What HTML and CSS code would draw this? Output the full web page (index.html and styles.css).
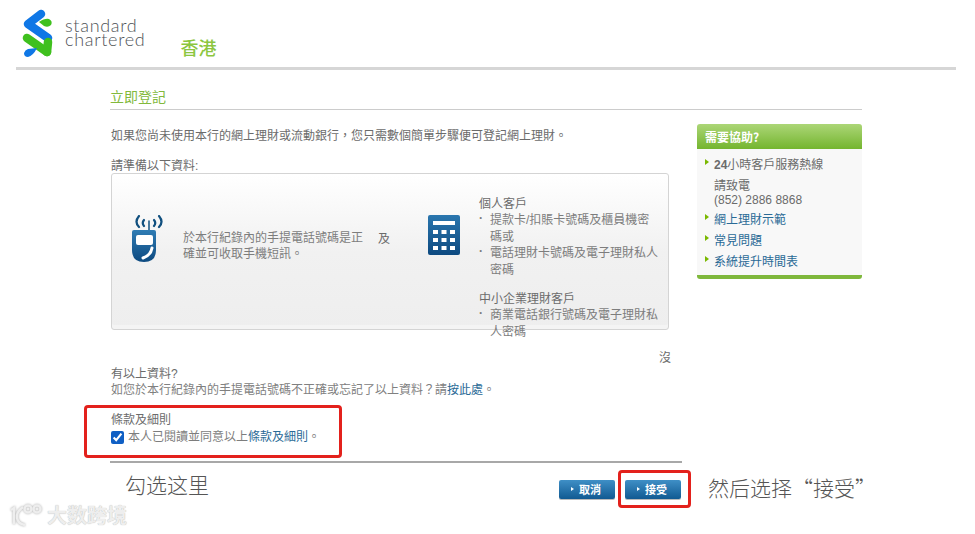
FILE: index.html
```html
<!DOCTYPE html>
<html lang="zh-Hant">
<head>
<meta charset="utf-8">
<title>立即登記</title>
<link rel="stylesheet" href="styles.css">
</head>
<body>
<header class="site-header">
  <svg class="logo" width="32" height="50" viewBox="0 0 32 50">
    <path class="logo-blue" d="M19 5 L6 15 L26 29" />
    <path class="logo-green-dot" d="M17 13 Q23 9 27 10 Q31 12 29 16 Q26 19 22 17 Z"/>
    <path class="logo-green" d="M5 29 L25 43" />
    <path class="logo-green" d="M25 43 L26 33" />
    <path class="logo-blue-dot" d="M15 39 Q11 47 6 48 Q2 48 2 44 Q3 41 6 40 Z"/>
  </svg>
  <div class="wordmark">standard<br>chartered</div>
  <div class="region">香港</div>
</header>
<div class="layout">
  <main class="content">
    <h1 class="title">立即登記</h1>
    <p class="intro">如果您尚未使用本行的網上理財或流動銀行，您只需數個簡單步驟便可登記網上理財。</p>
    <p class="prepare">請準備以下資料:</p>
    <section class="panel">
      <svg class="phone-icon" width="32" height="48" viewBox="0 0 32 48">
        <defs><linearGradient id="bl" x1="0" y1="0" x2="0" y2="1"><stop offset="0" stop-color="#2f7cb4"/><stop offset="1" stop-color="#0d4a80"/></linearGradient></defs>
        <path d="M7 1 Q2 7 7 12 M12 5 Q9.500 8 12 11 M22 5 Q24.500 8 22 11 M27 1 Q32 7 27 12" class="waves"/>
        <path d="M17 6 V16" class="antenna"/>
        <path d="M0 17 Q0 15 2 15 H22 Q24 15 24 17 V35 Q24 47 12 47 Q0 47 0 35Z" fill="url(#bl)"/>
        <rect x="4" y="20" width="17" height="10" rx="2" fill="#fff"/>
        <path d="M20 33 Q19 40 11 43" class="phone-curve"/>
      </svg>
      <p class="phone-text">於本行紀錄內的手提電話號碼是正確並可收取手機短訊。</p>
      <span class="and">及</span>
      <svg class="calc-icon" width="32" height="40" viewBox="0 0 32 40">
        <defs><linearGradient id="bc" x1="0" y1="0" x2="0" y2="1"><stop offset="0" stop-color="#2a76ae"/><stop offset="1" stop-color="#0d4a80"/></linearGradient></defs>
        <rect width="32" height="40" rx="2" fill="url(#bc)"/>
        <rect x="5" y="6" width="22" height="4" fill="#fff"/>
        <g fill="#fff">
          <rect x="5" y="15" width="5" height="4"/><rect x="13.500" y="15" width="5" height="4"/><rect x="22" y="15" width="5" height="4"/>
          <rect x="5" y="23" width="5" height="4"/><rect x="13.500" y="23" width="5" height="4"/><rect x="22" y="23" width="5" height="4"/>
          <rect x="5" y="31" width="5" height="4"/><rect x="13.500" y="31" width="5" height="4"/><rect x="22" y="31" width="5" height="4"/>
        </g>
      </svg>
      <div class="req">
        <h2 class="req-title">個人客戶</h2>
        <ul class="req-list">
          <li>提款卡/扣賬卡號碼及櫃員機密碼或</li>
          <li>電話理財卡號碼及電子理財私人密碼</li>
        </ul>
        <h2 class="req-title req-gap">中小企業理財客戶</h2>
        <ul class="req-list">
          <li>商業電話銀行號碼及電子理財私人密碼</li>
        </ul>
      </div>
    </section>
    <div class="missing">
      <h3 class="missing-title"><span class="wrap-char">沒</span>有以上資料?</h3>
      <p class="missing-text">如您於本行紀錄內的手提電話號碼不正確或忘記了以上資料？請<a href="#">按此處</a>。</p>
    </div>
    <div class="terms">
      <div class="terms-title">條款及細則</div>
      <label class="terms-check"><input type="checkbox" checked>本人已閱讀並同意以上<a href="#">條款及細則</a>。</label>
    </div>
    <div class="actions">
      <button class="btn btn-cancel" type="button">取消</button>
      <button class="btn" type="button">接受</button>
    </div>
  </main>
  <aside class="help">
    <div class="help-head">需要協助?</div>
    <ul class="help-list">
      <li class="hotline"><b>24</b>小時客戶服務熱線
        <div class="hotline-sub">請致電<br>(852) 2886 8868</div></li>
      <li><a href="#">網上理財示範</a></li>
      <li><a href="#">常見問題</a></li>
      <li><a href="#">系統提升時間表</a></li>
    </ul>
  </aside>
</div>
<div class="mark mark-terms"></div>
<div class="mark mark-accept"></div>
<div class="note note-left">勾选这里</div>
<div class="note note-right">然后选择“接受”</div>
<div class="watermark">
  <svg width="36" height="24" viewBox="0 0 36 24"><path d="M2 7 L5 5 V21 M14 4 Q7 9 8 15 Q9 21 16 22" class="wm"/><circle cx="19" cy="6" r="3.500" class="wm"/><circle cx="28" cy="6" r="3.500" class="wm"/></svg>
  <span>大数跨境</span>
</div>
</body>
</html>
```

FILE: styles.css
```css
* { box-sizing: border-box; }
html, body { margin: 0; padding: 0; }
body {
  width: 975px;
  height: 534px;
  overflow: hidden;
  background: #fff;
  position: relative;
  font: 12px/16px "Liberation Sans", "Noto Sans CJK TC", sans-serif;
  color: #6b6b6b;
}
a { color: #2a6a96; text-decoration: none; }
h1, h2, h3, p, ul { margin: 0; padding: 0; font-weight: normal; }
ul { list-style: none; }

.site-header {
  margin: 0 19px 0 16px;
  height: 70px;
  border-bottom: 3px solid #d6d6d6;
  display: flex;
  align-items: flex-start;
  padding: 9px 0 0 6px;
}
.logo { flex: none; }
.logo-blue, .logo-green { fill: none; stroke-width: 8.500; stroke-linecap: round; stroke-linejoin: round; }
.logo-blue { stroke: #0f77e6; }
.logo-green { stroke: #3fc01e; }
.logo-green-dot { fill: #3fc01e; }
.logo-blue-dot { fill: #0f77e6; }
.wordmark {
  margin: 9px 0 0 11px;
  font: 300 18px/14px Lato, sans-serif;
  color: #505458;
  letter-spacing: .7px;
}
.region {
  margin: 27px 0 0 35px;
  font: 500 18px/22px "Noto Sans CJK TC", sans-serif;
  color: #8cc63f;
}

.layout {
  display: flex;
  margin-left: 110px;
  width: 752px;
  gap: 15px;
}
.content { width: 572px; flex: none; }
.title {
  margin-top: 19px;
  width: 752px;
  height: 21px;
  border-bottom: 1px solid #ccc;
  font-size: 14px;
  line-height: 16px;
  color: #82b93c;
}
.intro { margin: 18px 0 0 1px; }
.prepare { margin: 14px 0 0 1px; }
.panel {
  margin: -1px 0 0 1px;
  width: 558px;
  height: 157px;
  border: 1px solid #d4d4d4;
  border-radius: 3px;
  background: linear-gradient(#fff 0, #f1f1f1 50%, #eee 100%);
  display: flex;
  align-items: flex-start;
  box-shadow: inset 0 -4px 0 #f4f4f4;
}
.phone-icon { margin: 41px 0 0 20px; flex: none; }
.waves, .antenna, .phone-curve { fill: none; stroke-linecap: round; }
.waves { stroke: #11507f; stroke-width: 2.200; }
.antenna { stroke: #11507f; stroke-width: 1.500; }
.phone-curve { stroke: #fff; stroke-width: 3; }
.wm { fill: none; stroke: #eee; stroke-width: 2.500; }
.phone-text { margin: 56px 0 0 19px; width: 182px; flex: none; color: #7d7d7d; }
.and { margin: 57px 0 0 13px; flex: none; }
.calc-icon { margin: 41px 0 0 38px; flex: none; }
.req { margin: 22px 0 0 19px; width: 180px; flex: none; line-height: 16.400px; color: #7d7d7d; }
.req-title { font-size: 12px; color: #6b6b6b; line-height: 16.400px; }
.req-gap { margin-top: 13px; }
.req-list li { padding-left: 11px; position: relative; }
.req-list li::before { content: "·"; position: absolute; left: 0; top: -2px; font-weight: bold; }

.missing { margin: 20px 0 0 1px; width: 560px; }
.missing-title { font-size: 12px; line-height: 16px; position: relative; height: 32px; padding-top: 16px; }
.wrap-char { position: absolute; right: 0; top: 0; }
.missing-text { color: #808080; line-height: 16px; }
.terms { margin: 14px 0 0 1px; }
.terms-title { height: 17px; line-height: 16px; }
.terms-check { display: flex; align-items: center; height: 16px; color: #7d7d7d; }
.terms-check input { margin: 0 4px 0 0; width: 13px; height: 13px; accent-color: #0f5fc4; }
.actions {
  margin-top: 16px;
  border-top: 2px solid #a8a8a8;
  display: flex;
  justify-content: flex-end;
  gap: 10px;
  padding: 17px 1px 0 0;
}
.btn {
  width: 56px;
  height: 19px;
  padding: 0 0 0 6px;
  border: 0;
  border-radius: 2px;
  background: linear-gradient(#3f8fc6, #115a92);
  box-shadow: 0 1px 0 #bbb;
  color: #fff;
  font: bold 11px/19px "Noto Sans CJK TC", sans-serif;
  position: relative;
}
.btn::before {
  content: "";
  position: absolute;
  left: 12px;
  top: 7px;
  border-left: 3px solid #fff;
  border-top: 2.500px solid transparent;
  border-bottom: 2.500px solid transparent;
}

.help {
  margin-top: 54px;
  width: 165px;
  height: 155px;
  flex: none;
  background: #f8f8f8;
  border-bottom: 4px solid #7fb83c;
  border-radius: 3px;
}
.help-head {
  height: 25px;
  background: linear-gradient(#acd677, #74b52f);
  border-radius: 3px 3px 0 0;
  color: #fff;
  font: bold 12px/25px "Noto Sans CJK TC", sans-serif;
  padding-left: 8px;
}
.help-list { padding: 8px 0 0 8px; }
.help-list li { padding-left: 9px; position: relative; margin-bottom: 5px; }
.help-list li::before {
  content: "";
  position: absolute;
  left: 0;
  top: 2px;
  border-left: 4px solid #7ab800;
  border-top: 3.500px solid transparent;
  border-bottom: 3.500px solid transparent;
}
.hotline b { font-weight: bold; }
.hotline-sub { margin-top: 6px; line-height: 14px; }

.mark { position: absolute; border: 3px solid #e3211c; border-radius: 4px; }
.mark-terms { left: 84px; top: 405px; width: 258px; height: 53px; }
.mark-accept { left: 618px; top: 470px; width: 73px; height: 38px; }
.note { position: absolute; font-family: "Noto Sans CJK SC", sans-serif; color: #555; font-weight: 300; }
.note-left { left: 125px; top: 469px; font-size: 21px; line-height: 30px; }
.note-right { left: 708px; top: 472px; font-size: 21px; line-height: 30px; }
.watermark {
  position: absolute;
  left: 9px;
  top: 503px;
  display: flex;
  align-items: center;
  gap: 2px;
  color: #eee;
  font: bold 20px/24px "Noto Sans CJK SC", sans-serif;
  text-shadow: 0 0 1px #aaa;
}
.watermark svg { filter: drop-shadow(0 0 1px #aaa); }
```
